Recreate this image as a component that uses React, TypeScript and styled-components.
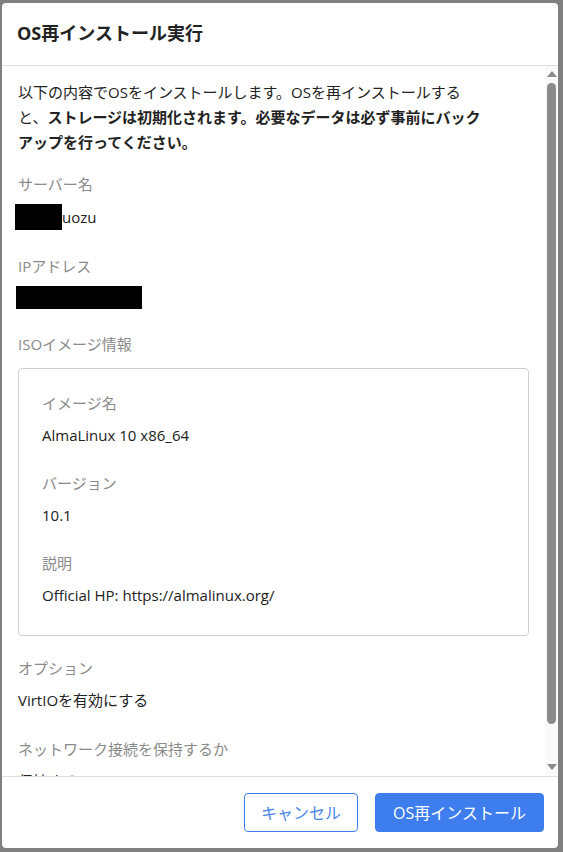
import React from "react";
import styled, { createGlobalStyle } from "styled-components";

const Global = createGlobalStyle`
  html, body { margin: 0; padding: 0; background: #808080; }
  body { font-family: "Open Sans", "Noto Sans CJK JP", "Noto Sans", sans-serif; }
  * { box-sizing: border-box; }
`;

const Backdrop = styled.div`
  width: 563px;
  height: 852px;
  padding: 3px 5px 4px 2px;
  background: #808080;
`;

const Modal = styled.div`
  height: 100%;
  background: #fff;
  border-radius: 4px;
  display: flex;
  flex-direction: column;
  overflow: hidden;
`;

const Header = styled.div`
  height: 63px;
  flex: none;
  display: flex;
  align-items: center;
  padding: 0 15px;
  border-bottom: 1px solid #dedede;
`;

const Title = styled.h2`
  margin: 0;
  font-size: 18px;
  font-weight: 700;
  color: #222;
  padding-bottom: 4px;
`;

const BodyRow = styled.div`
  flex: 1;
  min-height: 0;
  display: flex;
`;

const Scroller = styled.div`
  flex: 1;
  overflow: hidden;
  padding: 14px 20px 0 16px;
  color: #222;
  font-size: 15px;
  line-height: 25px;
`;

const Rail = styled.div`
  width: 13px;
  flex: none;
  display: flex;
  flex-direction: column;
  align-items: center;
  background: #fafafa;
  padding-top: 5px;
`;

const Arrow = styled.div<{ $down?: boolean }>`
  width: 0;
  height: 0;
  border-left: 5px solid transparent;
  border-right: 5px solid transparent;
  ${(p) =>
    p.$down
      ? "border-top: 6px solid #8a8a8a; margin-top: auto; margin-bottom: 6px;"
      : "border-bottom: 6px solid #8a8a8a; margin-bottom: 6px;"}
`;

const Thumb = styled.div`
  width: 9px;
  height: 641px;
  border-radius: 5px;
  background: #8a8a8a;
`;

const Intro = styled.p`
  margin: 0 0 17px;
  white-space: nowrap;
`;

const Strong = styled.strong`
  font-weight: 700;
`;

const Field = styled.div<{ $gap?: number }>`
  margin-bottom: ${(p) => p.$gap ?? 24}px;
`;

const Label = styled.div`
  color: #8a8a8a;
  margin-bottom: 7px;
`;

const Value = styled.div`
  color: #222;
  display: flex;
  align-items: center;
`;

const Redact = styled.span<{ $w: number; $h: number; $shift: number }>`
  display: inline-block;
  width: ${(p) => p.$w}px;
  height: ${(p) => p.$h}px;
  margin-left: ${(p) => p.$shift}px;
  background: #000;
`;

const Card = styled.div`
  border: 1px solid #cfcfcf;
  border-radius: 4px;
  padding: 22px 23px 3px;
  margin: 11px 0 20px 0;
  width: 511px;
`;

const Footer = styled.div`
  height: 72px;
  flex: none;
  border-top: 1px solid #dedede;
  display: flex;
  align-items: center;
  justify-content: flex-end;
  gap: 17px;
  padding: 0 14px 1px 0;
`;

const Button = styled.button<{ $primary?: boolean }>`
  height: 39px;
  border-radius: 4px;
  font-family: inherit;
  font-size: 16px;
  cursor: pointer;
  border: 1px solid #3d7ded;
  background: ${(p) => (p.$primary ? "#3d7ded" : "#fff")};
  color: ${(p) => (p.$primary ? "#fff" : "#4a86e8")};
  width: ${(p) => (p.$primary ? 169 : 114)}px;
`;

export default function App() {
  return (
    <Backdrop>
      <Global />
      <Modal>
        <Header>
          <Title>OS再インストール実行</Title>
        </Header>
        <BodyRow>
          <Scroller>
            <Intro>
              以下の内容でOSをインストールします。OSを再インストールする
              <br />
              と、<Strong>ストレージは初期化されます。必要なデータは必ず事前にバック</Strong>
              <br />
              <Strong>アップを行ってください。</Strong>
            </Intro>
            <Field>
              <Label>サーバー名</Label>
              <Value>
                <Redact $w={47} $h={26} $shift={-3} />
                uozu
              </Value>
            </Field>
            <Field $gap={23}>
              <Label>IPアドレス</Label>
              <Value>
                <Redact $w={126} $h={23} $shift={-2} />
              </Value>
            </Field>
            <Label>ISOイメージ情報</Label>
            <Card>
              <Field $gap={23}>
                <Label>イメージ名</Label>
                <Value>AlmaLinux 10 x86_64</Value>
              </Field>
              <Field $gap={23}>
                <Label>バージョン</Label>
                <Value>10.1</Value>
              </Field>
              <Field>
                <Label>説明</Label>
                <Value>Official HP: https://almalinux.org/</Value>
              </Field>
            </Card>
            <Field $gap={24}>
              <Label>オプション</Label>
              <Value>VirtIOを有効にする</Value>
            </Field>
            <Field>
              <Label>ネットワーク接続を保持するか</Label>
              <Value>保持する</Value>
            </Field>
          </Scroller>
          <Rail>
            <Arrow />
            <Thumb />
            <Arrow $down />
          </Rail>
        </BodyRow>
        <Footer>
          <Button>キャンセル</Button>
          <Button $primary>OS再インストール</Button>
        </Footer>
      </Modal>
    </Backdrop>
  );
}
